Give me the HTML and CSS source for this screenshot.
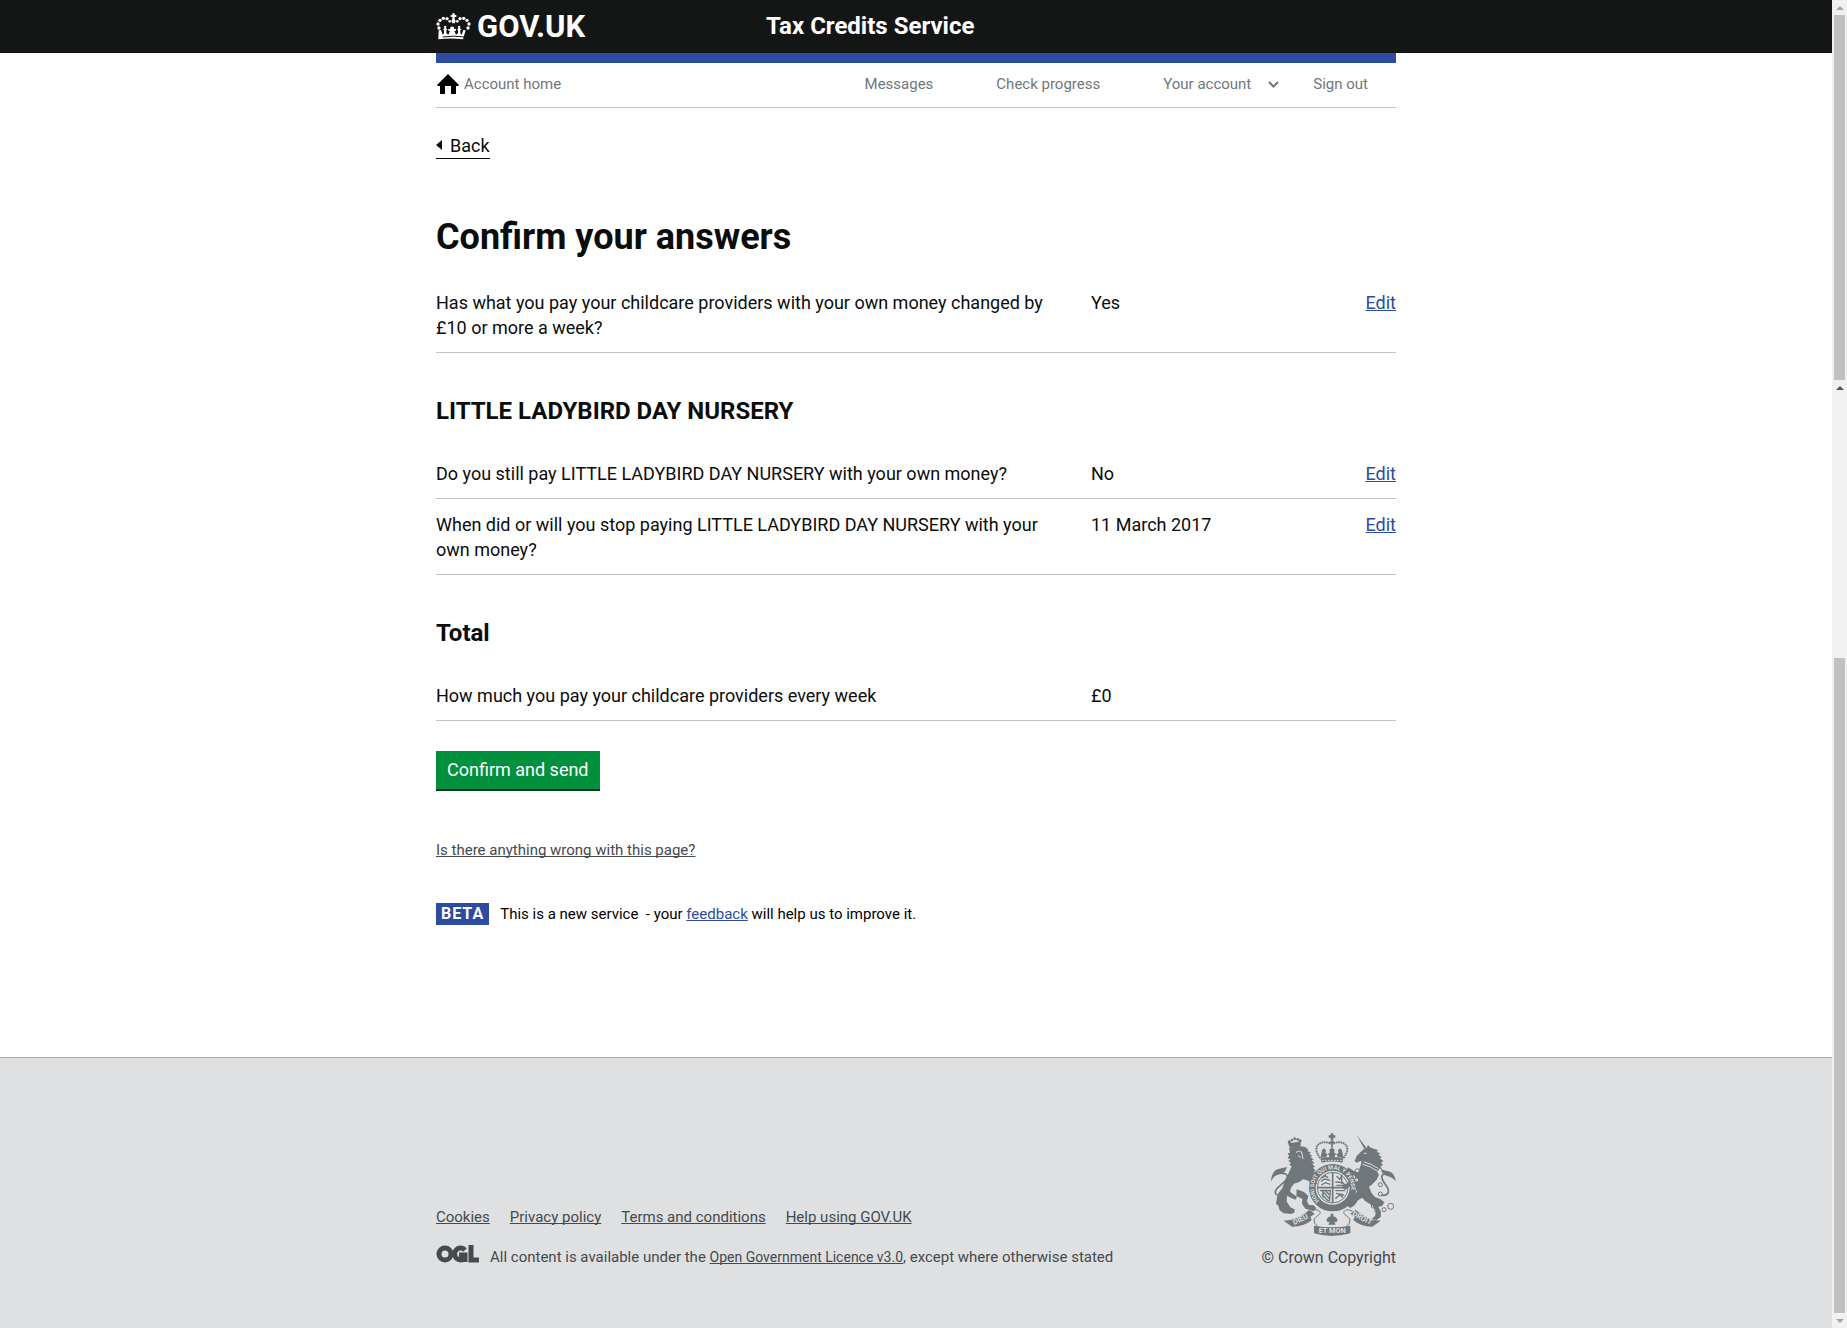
FILE: index.html
```html
<!DOCTYPE html>
<html lang="en">
<head>
<meta charset="utf-8">
<meta name="viewport" content="width=device-width, initial-scale=1">
<title>Confirm your answers - Tax Credits Service - GOV.UK</title>
<link rel="stylesheet" href="styles.css">
</head>
<body>
<div class="page">
  <header class="site-header">
    <div class="container site-header__inner">
      <a class="logo" href="#">
        <svg class="logo__crown" viewBox="18 13 105 81" aria-hidden="true">
          <g fill="#fff">
            <path d="M67 14h7v5h5v6h-5v5l3 8-3 6h-7l-3-6 3-8v-5h-5v-6h5z"/>
            <circle cx="51" cy="30" r="5"/><circle cx="40" cy="29" r="5"/><circle cx="30" cy="35" r="5"/><circle cx="24" cy="46" r="5"/><circle cx="27" cy="58" r="5"/>
            <circle cx="90" cy="30" r="5"/><circle cx="101" cy="29" r="5"/><circle cx="111" cy="35" r="5"/><circle cx="117" cy="46" r="5"/><circle cx="114" cy="58" r="5"/>
            <circle cx="59" cy="38" r="4"/><circle cx="82" cy="38" r="4"/>
            <path d="M26 65l7-1 5 14 4-4v-9l-3-3 4-3-1-7h7l-1 7 4 3-3 3v9l6 4 5-11-5-1v-6l5 2 2-8h9l2 8 5-2v6l-5 1 5 11 6-4v-9l-3-3 4-3-1-7h7l-1 7 4 3-3 3v9l4 4 5-14 7 1-8 27q-37-5-74 0z"/>
          </g>
          <path d="M38 85q33-5 66 0" fill="none" stroke="#141615" stroke-width="3"/>
        </svg>
        <span>GOV.UK</span>
      </a>
      <a class="service-name" href="#">Tax Credits Service</a>
    </div>
  </header>

  <nav class="container account-nav" aria-label="Account">
    <a class="account-nav__home" href="#">
      <svg class="home-icon" viewBox="0 0 22 20" aria-hidden="true"><path d="M11 0L0 11l1 1h2v8h5v-8h6v8h5v-8h2l1-1z"/></svg>
      Account home
    </a>
    <a class="account-nav__link" href="#">Messages</a>
    <a class="account-nav__link" href="#">Check progress</a>
    <a class="account-nav__link account-nav__link--menu" href="#">Your account
      <svg class="chevron" viewBox="0 0 11 7" aria-hidden="true"><path d="M1 1l4.500 4.500L10 1" fill="none" stroke="#6f777b" stroke-width="2"/></svg>
    </a>
    <a class="account-nav__link account-nav__link--last" href="#">Sign out</a>
  </nav>

  <main class="container content">
    <a class="back-link" href="#">Back</a>
    <h1>Confirm your answers</h1>
    <table class="answers">
      <tbody>
        <tr><th scope="row">Has what you pay your childcare providers with your own money changed by £10 or more a week?</th><td>Yes</td><td class="answers__edit"><a href="#">Edit</a></td></tr>
      </tbody>
    </table>
    <h2>LITTLE LADYBIRD DAY NURSERY</h2>
    <table class="answers">
      <tbody>
        <tr><th scope="row">Do you still pay LITTLE LADYBIRD DAY NURSERY with your own money?</th><td>No</td><td class="answers__edit"><a href="#">Edit</a></td></tr>
        <tr><th scope="row">When did or will you stop paying LITTLE LADYBIRD DAY NURSERY with your own money?</th><td>11 March 2017</td><td class="answers__edit"><a href="#">Edit</a></td></tr>
      </tbody>
    </table>
    <h2>Total</h2>
    <table class="answers">
      <tbody>
        <tr><th scope="row">How much you pay your childcare providers every week</th><td>£0</td><td class="answers__edit"></td></tr>
      </tbody>
    </table>
    <button class="button" type="button">Confirm and send</button>
    <div class="report"><a href="#">Is there anything wrong with this page?</a></div>
    <div class="phase"><strong class="phase__tag">BETA</strong><span>This is a new service &nbsp;- your <a href="#">feedback</a> will help us to improve it.</span></div>
  </main>

  <footer class="site-footer">
    <div class="container site-footer__inner">
      <div class="site-footer__meta">
        <div class="site-footer__links">
          <a href="#">Cookies</a><a href="#">Privacy policy</a><a href="#">Terms and conditions</a><a href="#">Help using GOV.UK</a>
        </div>
        <div class="licence">
          <svg class="ogl" viewBox="0 0 43 18" aria-label="OGL" role="img">
            <g fill="none" stroke="#454a4c" stroke-width="5">
              <circle cx="9" cy="9" r="6"/>
              <path d="M29 5a6 6 0 1 0 0 8M23 10h6v7"/>
              <path d="M35 0v15h8"/>
            </g>
          </svg>
          <span>All content is available under the <a class="licence__link" href="#">Open Government Licence v3.0</a>, except where otherwise stated</span>
        </div>
      </div>
      <a class="copyright" href="#">
        <svg class="crest" viewBox="93 69 375 309" aria-hidden="true">
          <defs>
            <path id="garter" d="M238 273a56 56 0 1 1 80 0"/>
          </defs>
          <g fill="#6f777b">
            <!-- lion -->
            <path d="M147 107l-3-7 34-5 5 6-3 9-30 3z"/><circle cx="164" cy="86" r="4"/><circle cx="148" cy="96" r="5"/><circle cx="156" cy="90" r="4"/><circle cx="173" cy="88" r="4"/><circle cx="180" cy="93" r="5"/>
            <path d="M147 113l38-4 12 3 8 7-2 5 10 3-5 4 9 7-6 3 11 8-8 1 10 10-8 1 9 9-6 3 8 9-6 3 10 9-2 8 6 9-7 2 4 9-10-2-14-8-19-4-11 8-16 5-9 12-3 12 12 9 9 6-4 9-12-4-14-8-1 18 11 17 13 6-1 10-10 4-22-2-12-9-5-15-6-4 3-20 5-14 11-13 6-18 13-28 9-20-7-5 5-5-8-6 6-5-8-3 4-8-4-7 7-2z"/>
            <path d="M170 238l22 8 13 12-4 16 6 11 14 1 8 9-9 7-24-6-10-15 1-14-18-9z"/>
            <path d="M200 192l20 7 10 14-4 7-14-2-15-12z"/>
            <path d="M93 214c1-17 8-33 20-36 10-4 21-5 28-7-3 10-7 16-14 19-7 4-19 4-26 12z"/>
            <!-- unicorn -->
            <path d="M350 75l29 38-6 4z"/>
            <path d="M369 119l11-6 4-8 6 7 11 4 12 4-2 6 10 4-6 4 11 8-7 3 12 9-8 3 6 9-8 2 5 9-8-1-6 10 5 9-7 14-13 14-10 7 8 20 11 12 15 5 12 10-6 10-12 4 8 14-1 16-12 9-15-3 10-9 3-13-10-18-23-14-8-10-13 8-10 15-13 8-10-7 7-15 15-15 8-13-10-17-12 2-13 11-10-7 3-9 12-3 11-12 14 1-1-12-16-6-9-11 4-9 19 12 14-4 7-20-1-8-13 6-6-5 6-15z"/>
            <path d="M468 214c-2-15-9-25-18-29-10-4-20-4-27-9 1 9 5 17 13 20 9 4 21 5 32 18z"/>
            <!-- royal crown -->
            <path d="M272 70h8v6h6v7h-6v7h-8v-7h-6v-7h6zM241 145q34-8 69 0l-3 13q-31-7-62 0z"/>
            <circle cx="276" cy="97" r="6"/>
            <path d="M242 143l4-22 6-6 6 6-2 8 7 3-5 10zM269 141l-5-10 6-4-2-7 8-8 8 8-2 7 6 4-5 10zM310 143l-4-22-6-6-6 6 2 8-7 3 5 10z"/>
          </g>
          <g fill="none" stroke="#6f777b">
            <path d="M105 190c31-2 42 2 35 16-9 19-37 26-34 42 3 10 14 10 23 7" stroke-width="5"/>
            <path d="M452 192c-24-3-30 3-25 16 7 18 24 26 17 41-5 9-18 9-24 2" stroke-width="5"/>
            <path d="M241 144c-30-36 3-58 33-42M310 144c30-36-3-58-33-42M276 99v20" stroke-width="6" stroke-dasharray="5 2"/>
            <circle cx="278" cy="233" r="61" stroke-width="20"/>
            <circle cx="278" cy="233" r="46" stroke-width="3"/>
            <path d="M278 188v90M233 233h90" stroke-width="5"/>
            <path d="M245 205l11-8 9 7M243 214l11-7 17 4M244 225l12-7 15 5M290 198l9 10 6-10v24M286 216l23 2 6 8M289 226h24M245 240l25 28M245 253l20 20M240 242l31-1-3 34M254 240l14 14M249 239v24M286 242h29M288 250l24 5M286 266l14-12 9 9" stroke-width="4"/>
            <circle cx="400" cy="288" r="6" stroke-width="3"/><circle cx="410" cy="302" r="6" stroke-width="3"/><circle cx="432" cy="299" r="6" stroke-width="3"/><circle cx="452" cy="289" r="9" stroke-width="3"/>
          </g>
          <g fill="none" stroke="#dee0e2" stroke-width="3">
            <path d="M168 127l10-4 9 5M174 137l8 5M185 127l4 20M372 130h8M368 163q20 3 45 21M372 156q20 3 43 20"/>
            <circle cx="352" cy="182" r="6" stroke="#6f777b" fill="#dee0e2"/><circle cx="350" cy="210" r="6" stroke="#6f777b" fill="#dee0e2"/><circle cx="421" cy="224" r="6" stroke="#6f777b" fill="#dee0e2"/><circle cx="421" cy="252" r="6" stroke="#6f777b" fill="#dee0e2"/>
            <path d="M246 151h60" stroke-dasharray="5 4"/>
          </g>
          <!-- scroll -->
          <g fill="#6f777b">
            <path d="M131 332q46-2 77-33l16 12-13 10 4 9q-22 20-59 20z"/>
            <path d="M422 332q-44-2-75-33l-16 12 13 10-4 9q22 20 57 20z"/>
            <path d="M222 347q54 9 109 0v23q-57 16-109 0z"/>
            <path d="M272 311h8v8q10 2 13 12-2 7-10 4l4 9h-22l4-9q-8 3-10-4 3-10 13-12z"/>
          </g>
          <g fill="none" stroke="#6f777b" stroke-width="3">
            <path d="M213 304q18-10 27 1c5 9-17 15-18 25q0 12 12 20M337 304q-18-10-25 1c-5 9 17 15 18 25q0 12-12 20"/>
          </g>
          <g class="crest__motto">
            <text><textPath href="#garter">HONI SOIT QUI MAL Y PENSE</textPath></text>
            <text class="crest__ribbon" transform="translate(163 345) rotate(-25)">DIEU</text>
            <text class="crest__ribbon" transform="translate(335 316) rotate(27)">DROIT</text>
            <text class="crest__ribbon" x="236" y="370">ET MON</text>
          </g>
        </svg>
        <span>© Crown Copyright</span>
      </a>
    </div>
  </footer>
</div>
<div class="scroll-rail" aria-hidden="true">
  <i class="scroll-rail__arrow scroll-rail__arrow--up"></i>
  <i class="scroll-rail__thumb"></i>
  <i class="scroll-rail__arrow scroll-rail__arrow--up scroll-rail__arrow--active"></i>
  <i></i>
  <i class="scroll-rail__thumb"></i>
  <i class="scroll-rail__arrow scroll-rail__arrow--down"></i>
</div>
</body>
</html>
```
FILE: styles.css
```css
* {
  box-sizing: border-box;
}

body {
  margin: 0;
  display: flex;
  min-height: 100vh;
  background: #fff;
  color: #0b0c0c;
  font-family: Roboto, "Liberation Sans", Arial, sans-serif;
  font-size: 18px;
  line-height: 25px;
}

a {
  color: inherit;
  text-decoration-skip-ink: none;
}

.page {
  flex: 1;
  min-width: 0;
  display: flex;
  flex-direction: column;
}

.container {
  width: 100%;
  max-width: 960px;
  margin: 0 auto;
}

/* Header */
.site-header {
  background: #141615;
  color: #fff;
  font-weight: 700;
}

.site-header__inner {
  display: grid;
  grid-template-columns: 330px 1fr;
  align-items: center;
  height: 53px;
}

.site-header a {
  text-decoration: none;
}

.logo {
  display: flex;
  align-items: center;
  gap: 6px;
  font-size: 31px;
}

.logo__crown {
  width: 35px;
  height: 27px;
}

.service-name {
  font-size: 24px;
}

/* Account navigation */
.account-nav {
  display: flex;
  align-items: center;
  border-top: 10px solid #2b4ca1;
  border-bottom: 1px solid #bfc1c3;
  height: 55px;
  padding-bottom: 2px;
  font-size: 15px;
  color: #6f777b;
}

.account-nav a {
  text-decoration: none;
}

.account-nav__home {
  display: flex;
  align-items: center;
  gap: 5px;
  margin-right: auto;
  padding-left: 1px;
}

.home-icon {
  width: 22px;
  height: 20px;
  fill: #000;
}

.account-nav__link {
  margin-right: 63px;
}

.account-nav__link--menu {
  display: flex;
  align-items: center;
  gap: 17px;
  margin-right: 34px;
}

.account-nav__link--last {
  margin-right: 28px;
}

.chevron {
  width: 11px;
  height: 7px;
}

/* Main content */
.content {
  padding: 23px 0 130px;
}

.back-link {
  display: inline-flex;
  align-items: center;
  gap: 8px;
  border-bottom: 1px solid #0b0c0c;
  text-decoration: none;
}

.back-link::before {
  content: "";
  border: 5px solid transparent;
  border-left-width: 0;
  border-right: 6px solid #0b0c0c;
}

h1 {
  margin: 58px 0 20px;
  font-size: 36px;
  line-height: 40px;
}

h2 {
  margin: 43px 0 22px;
  font-size: 24px;
  line-height: 30px;
}

.answers {
  width: 100%;
  border-collapse: separate;
  border-spacing: 0;
  table-layout: fixed;
}

.answers th,
.answers td {
  padding: 13px 0 12px;
  border-bottom: 1px solid #bfc1c3;
  font-weight: 400;
  text-align: left;
  vertical-align: top;
}

.answers th {
  width: 655px;
  padding-right: 30px;
}

.answers .answers__edit {
  width: 120px;
  text-align: right;
}

.answers a,
.phase a {
  color: #2b4ca1;
}

.button {
  display: block;
  height: 40px;
  margin-top: 30px;
  padding: 0 11px;
  border: 0;
  border-bottom: 2px solid #003618;
  background: #00903e;
  color: #fff;
  font: inherit;
}

.report {
  margin-top: 47px;
  color: #454a4c;
  font-size: 15px;
}

.phase {
  display: flex;
  align-items: center;
  gap: 11px;
  margin-top: 39px;
  color: #000;
  font-size: 15px;
}

.phase__tag {
  padding: 0 5px;
  background: #2b4ca1;
  color: #fff;
  font-size: 16px;
  line-height: 22px;
  letter-spacing: 1px;
}

/* Footer */
.site-footer {
  flex: 1;
  border-top: 1px solid #a1acb2;
  background: #dee0e2;
  color: #454a4c;
  font-size: 15px;
}

.site-footer__inner {
  display: flex;
  align-items: flex-end;
  justify-content: space-between;
  padding: 75px 0 58px;
}

.site-footer__meta {
  display: flex;
  flex-direction: column;
  gap: 15px;
}

.site-footer__links {
  display: flex;
  gap: 20px;
}

.licence {
  display: flex;
  gap: 11px;
}

.ogl {
  width: 43px;
  height: 18px;
}

.licence__link {
  font-size: 14px;
}

.copyright {
  display: flex;
  flex-direction: column;
  align-items: flex-end;
  gap: 9px;
  font-size: 16px;
  text-decoration: none;
}

.crest {
  width: 125px;
  height: 103px;
}

.crest__motto {
  fill: #dee0e2;
  font-size: 17px;
  font-weight: 700;
}

.crest__ribbon {
  font-size: 22px;
}

/* Scroll rail */
.scroll-rail {
  position: sticky;
  top: 0;
  display: grid;
  grid-template-rows: 15px 365fr 15px 263fr 655fr 15px;
  justify-items: center;
  align-items: center;
  width: 15px;
  height: 100vh;
  background: #f1f1f1;
}

.scroll-rail__thumb {
  width: 11px;
  height: 100%;
  background: #c1c1c1;
}

.scroll-rail__arrow {
  border: 4px solid transparent;
}

.scroll-rail__arrow--up {
  border-top-width: 0;
  border-bottom-color: #a3a3a3;
}

.scroll-rail__arrow--active {
  border-bottom-color: #505050;
}

.scroll-rail__arrow--down {
  border-bottom-width: 0;
  border-top-color: #a3a3a3;
}
```
